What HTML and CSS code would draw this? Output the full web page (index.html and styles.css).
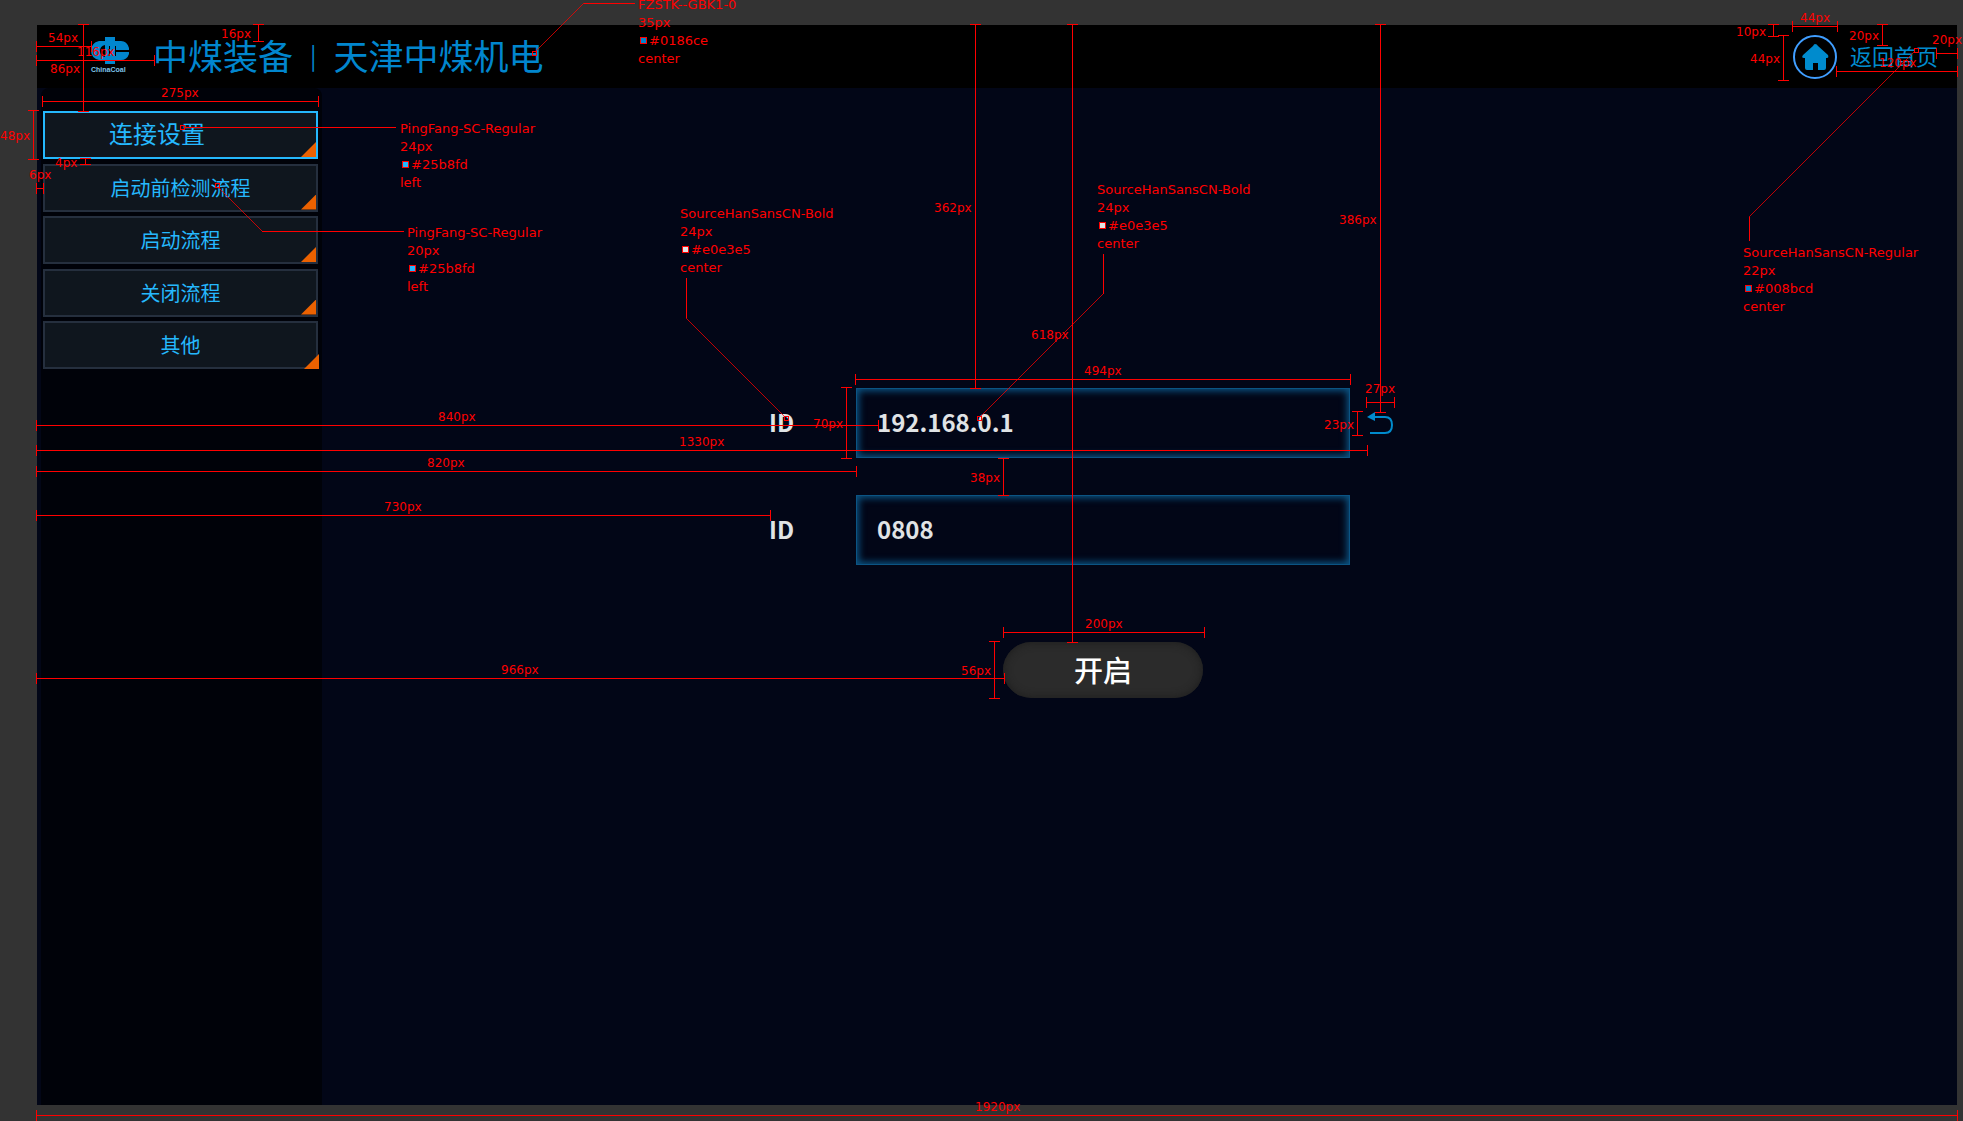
FILE: index.html
```html
<!DOCTYPE html>
<html lang="zh-CN">
<head>
<meta charset="utf-8">
<meta name="viewport" content="width=device-width, initial-scale=1">
<title>连接设置</title>
<link rel="stylesheet" href="styles.css">
</head>
<body>
<div class="screen">
  <header class="topbar">
    <svg class="logo" viewBox="0 0 38 36" role="img" aria-label="ChinaCoal">
      <path class="logo-mark" d="M14 0h10v4h6q6 0 8 7v2H25v-4h-1v10h1v-4h13v2q-2 6-8 6h-6v4H14v-4H8q-8-2-8-9.500t8-9.500h6z"/>
      <path class="logo-cut" d="M14 8v12q-5-1-5-6t5-6zM18 9h1v10h-1z"/>
      <text class="logo-text" x="0" y="35">ChinaCoal</text>
    </svg>
    <h1 class="brand"><span>中煤装备</span><span class="brand-bar">|</span><span>天津中煤机电</span></h1>
    <a class="home" href="#">
      <svg class="home-icon" viewBox="0 0 44 44" aria-hidden="true">
        <circle cx="22" cy="22" r="21"/>
        <path d="M22 9q2 0 3 2l10 9q1 3-1 3h-1v10q0 2-2 2h-6v-7h-5v7h-6q-2 0-2-2V23h-1q-3 0-1-3l10-9q1-2 2-2z"/>
      </svg>
      <span class="home-text">返回首页</span>
    </a>
  </header>
  <div class="body">
    <div class="sidebar">
      <nav class="menu">
        <button class="item item-active" type="button">连接设置</button>
        <button class="item" type="button">启动前检测流程</button>
        <button class="item" type="button">启动流程</button>
        <button class="item" type="button">关闭流程</button>
        <button class="item item-last" type="button">其他</button>
      </nav>
    </div>
    <main class="content">
      <form class="form">
        <label for="ip">ID</label>
        <input id="ip" type="text" value="192.168.0.1">
        <button class="undo" type="button" aria-label="撤销">
          <svg viewBox="0 0 27 23" aria-hidden="true"><path class="undo-line" d="M7 5h11q7 0 7 8t-7 8H3"/><path class="undo-head" d="M0 5l8-5v9z"/></svg>
        </button>
        <label for="code">ID</label>
        <input id="code" type="text" value="0808">
        <button class="start" type="button">开启</button>
      </form>
    </main>
  </div>
</div>

<svg class="spec" width="1963" height="1121">
  <g class="rulers">
    <path d="M83 24V111M78 24h11M78 111h11"/>
    <path d="M36 46H91M36 41v11M91 41v11"/>
    <path d="M36 60H154M36 55v11M154 55v11"/>
    <path d="M258 24V41M253 24h11M253 41h11"/>
    <path d="M42 101H318M42 96v11M318 96v11"/>
    <path d="M33 110V159M28 110h11M28 159h11"/>
    <path d="M85 158V164M80 158h11M80 164h11"/>
    <path d="M36 188H43M36 183v11M43 183v11"/>
    <path d="M1773 24V36M1768 24h11M1768 36h11"/>
    <path d="M1792 26H1837M1792 21v11M1837 21v11"/>
    <path d="M1783 35V80M1778 35h11M1778 80h11"/>
    <path d="M1882 24V45M1877 24h11M1877 45h11"/>
    <path d="M1936 53H1957M1936 48v11M1957 48v11"/>
    <path d="M1836 71H1957M1836 66v11M1957 66v11"/>
    <path d="M975 24V388M970 24h11M970 388h11"/>
    <path d="M1072 24V642M1067 24h11M1067 642h11"/>
    <path d="M1380 24V412M1375 24h11M1375 412h11"/>
    <path d="M855 379H1350M855 374v11M1350 374v11"/>
    <path d="M1366 402H1394M1366 397v11M1394 397v11"/>
    <path d="M1357 411V435M1352 411h11M1352 435h11"/>
    <path d="M846 387V458M841 387h11M841 458h11"/>
    <path d="M36 425H878M36 420v11M878 420v11"/>
    <path d="M36 450H1367M36 445v11M1367 445v11"/>
    <path d="M36 471H856M36 466v11M856 466v11"/>
    <path d="M36 515H770M36 510v11M770 510v11"/>
    <path d="M1003 458V495M998 458h11M998 495h11"/>
    <path d="M1003 632H1204M1003 627v11M1204 627v11"/>
    <path d="M994 641V698M989 641h11M989 698h11"/>
    <path d="M36 678H1004M36 673v11M1004 673v11"/>
    <path d="M36 1115H1957M36 1110v11M1957 1110v11"/>
  </g>
  <g class="leaders">
    <path d="M184 127H396"/>
    <path d="M262 231H404"/>
    <path d="M686 278V318"/>
    <path d="M1103 254V294"/>
    <path d="M584 3H635"/>
    <path d="M1749 217V241"/>
  </g>
  <g class="diagonals">
    <path d="M218 187L262 231M686 318L785 417M1103 294L980 417M584 3L535 52M1749 217L1915 51"/>
  </g>
  <g class="anchors">
    <rect x="180" y="125" width="4" height="4"/>
    <rect x="215" y="183" width="4" height="4"/>
    <rect x="784" y="416" width="4" height="4"/>
    <rect x="977" y="416" width="4" height="4"/>
    <rect x="532" y="51" width="4" height="4"/>
    <rect x="1914" y="48" width="4" height="4"/>
  </g>
  <g class="swatches">
    <rect class="sky" x="402" y="161" width="6" height="6"/>
    <rect class="sky" x="409" y="265" width="6" height="6"/>
    <rect class="pale" x="682" y="246" width="6" height="6"/>
    <rect class="pale" x="1099" y="222" width="6" height="6"/>
    <rect class="blue" x="640" y="37" width="6" height="6"/>
    <rect class="blue" x="1745" y="285" width="6" height="6"/>
  </g>
  <g class="notes">
    <text x="48" y="42">54px</text>
    <text x="50" y="73">86px</text>
    <text x="77" y="56">116px</text>
    <text x="221" y="38">16px</text>
    <text x="161" y="97">275px</text>
    <text x="0" y="140">48px</text>
    <text x="55" y="167">4px</text>
    <text x="29" y="179">6px</text>
    <text x="1736" y="36">10px</text>
    <text x="1800" y="22">44px</text>
    <text x="1750" y="63">44px</text>
    <text x="1849" y="40">20px</text>
    <text x="1932" y="44">20px</text>
    <text x="1879" y="67">120px</text>
    <text x="934" y="212">362px</text>
    <text x="1031" y="339">618px</text>
    <text x="1339" y="224">386px</text>
    <text x="1084" y="375">494px</text>
    <text x="1365" y="393">27px</text>
    <text x="1324" y="429">23px</text>
    <text x="813" y="428">70px</text>
    <text x="438" y="421">840px</text>
    <text x="679" y="446">1330px</text>
    <text x="427" y="467">820px</text>
    <text x="384" y="511">730px</text>
    <text x="970" y="482">38px</text>
    <text x="1085" y="628">200px</text>
    <text x="961" y="675">56px</text>
    <text x="501" y="674">966px</text>
    <text x="975" y="1111">1920px</text>
  </g>
  <g class="notes callouts">
    <text x="400" y="133">PingFang-SC-Regular</text>
    <text x="400" y="151">24px</text>
    <text x="411" y="169">#25b8fd</text>
    <text x="400" y="187">left</text>

    <text x="407" y="237">PingFang-SC-Regular</text>
    <text x="407" y="255">20px</text>
    <text x="418" y="273">#25b8fd</text>
    <text x="407" y="291">left</text>

    <text x="680" y="218">SourceHanSansCN-Bold</text>
    <text x="680" y="236">24px</text>
    <text x="691" y="254">#e0e3e5</text>
    <text x="680" y="272">center</text>

    <text x="1097" y="194">SourceHanSansCN-Bold</text>
    <text x="1097" y="212">24px</text>
    <text x="1108" y="230">#e0e3e5</text>
    <text x="1097" y="248">center</text>

    <text x="638" y="9">FZSTK--GBK1-0</text>
    <text x="638" y="27">35px</text>
    <text x="649" y="45">#0186ce</text>
    <text x="638" y="63">center</text>

    <text x="1743" y="257">SourceHanSansCN-Regular</text>
    <text x="1743" y="275">22px</text>
    <text x="1754" y="293">#008bcd</text>
    <text x="1743" y="311">center</text>
  </g>
</svg>
</body>
</html>
```
FILE: styles.css
```css
* {
  box-sizing: border-box;
}

body {
  margin: 0;
  min-height: 100vh;
  padding: 25px 6px 16px 37px;
  display: flex;
  position: relative;
  overflow-x: hidden;
  background: #333;
  font-family: "Noto Sans CJK SC", sans-serif;
}

button,
input {
  font: inherit;
  margin: 0;
}

button {
  cursor: pointer;
}

.screen {
  flex: 1;
  display: flex;
  flex-direction: column;
  background: #020617;
}

/* Top bar */
.topbar {
  display: flex;
  align-items: center;
  height: 63px;
  padding: 0 19px 0 54px;
  background: #000;
}

.logo {
  width: 38px;
  height: 36px;
  margin: 0 24px 4px 0;
  overflow: visible;
}

.logo-mark {
  fill: #0186ce;
}

.logo-cut {
  fill: #000;
}

.logo-text {
  fill: #7fc4ea;
  font: bold 7px "Liberation Sans", sans-serif;
}

.brand {
  display: flex;
  align-items: center;
  gap: 17px;
  margin: 0;
  padding-bottom: 4px;
  color: #0186ce;
  font-size: 35px;
  font-weight: 400;
  line-height: 40px;
}

.brand-bar {
  font-size: 24px;
}

.home {
  display: flex;
  align-items: center;
  gap: 13px;
  margin-left: auto;
  color: #008bcd;
  font-size: 22px;
  line-height: 32px;
  text-decoration: none;
}

.home-text {
  padding-bottom: 4px;
}

.home-icon {
  width: 44px;
  height: 44px;
}

.home-icon circle {
  fill: none;
  stroke: #409eff;
  stroke-width: 2;
}

.home-icon path {
  fill: #008bcd;
}

/* Sidebar */
.body {
  flex: 1;
  display: flex;
}

.sidebar {
  width: 281px;
  margin-left: 4px;
  padding: 23px 4px 0 2px;
  border-radius: 8px 8px 0 0;
  background: #000209;
}

.menu {
  display: flex;
  flex-direction: column;
  justify-content: space-between;
  height: 258px;
}

.item {
  position: relative;
  height: 48px;
  padding: 0;
  border: 2px solid #252f3e;
  background: #0f161e;
  color: #25b8fd;
  font-size: 20px;
  line-height: 28px;
}

.item::after {
  content: "";
  position: absolute;
  right: 0;
  bottom: 0;
  width: 15px;
  height: 15px;
  background: #eb6100;
  clip-path: polygon(100% 0, 100% 100%, 0 100%);
}

.item-active {
  padding: 0 0 4px 64px;
  border-color: #25b8fd;
  font-size: 24px;
  text-align: left;
}

.item-last::after {
  right: -3px;
  bottom: -2px;
}

/* Connection form */
.content {
  flex: 1;
  padding: 300px 0 0 447px;
}

.form {
  display: grid;
  grid-template-columns: 87px 494px 44px;
  row-gap: 37px;
  align-items: center;
  color: #e0e3e5;
  font-size: 24px;
  font-weight: 700;
}

.form input {
  grid-column: 2;
  width: 100%;
  height: 70px;
  padding: 0 20px 4px;
  border: 1px solid #0b5484;
  background: transparent;
  box-shadow: inset 0 0 7px 2px #0b5484;
  color: inherit;
  outline: none;
}

.form label {
  grid-column: 1;
  padding-bottom: 4px;
}

.undo {
  justify-self: end;
  width: 27px;
  height: 23px;
  padding: 0;
  border: 0;
  background: none;
}

.undo svg {
  display: block;
  width: 27px;
  height: 23px;
}

.undo-line {
  fill: none;
  stroke: #008bcd;
  stroke-width: 2;
}

.undo-head {
  fill: #008bcd;
}

.start {
  grid-column: 2;
  justify-self: center;
  width: 200px;
  height: 56px;
  margin-top: 40px;
  padding: 0 0 2px;
  border: 0;
  border-radius: 28px;
  background: #2b2b2b;
  box-shadow: inset 0 0 8px #1c1c1c;
  color: #fff;
  font-size: 29px;
  font-weight: 500;
  line-height: 40px;
}

/* Design annotations laid over the screen */
.spec {
  position: absolute;
  top: 0;
  left: 0;
  pointer-events: none;
}

.rulers path,
.leaders path,
.anchors rect,
.swatches rect {
  stroke: #f00;
  stroke-width: 1;
  fill: none;
  shape-rendering: crispEdges;
}

.diagonals path {
  stroke: #f00;
  stroke-width: 1;
  fill: none;
  opacity: 0.75;
}

.swatches .sky {
  fill: #25b8fd;
}

.swatches .pale {
  fill: #e0e3e5;
}

.swatches .blue {
  fill: #0186ce;
}

.notes text {
  fill: #f00;
  font: 12px "DejaVu Sans", sans-serif;
}

.callouts text {
  font-size: 13px;
}
```
